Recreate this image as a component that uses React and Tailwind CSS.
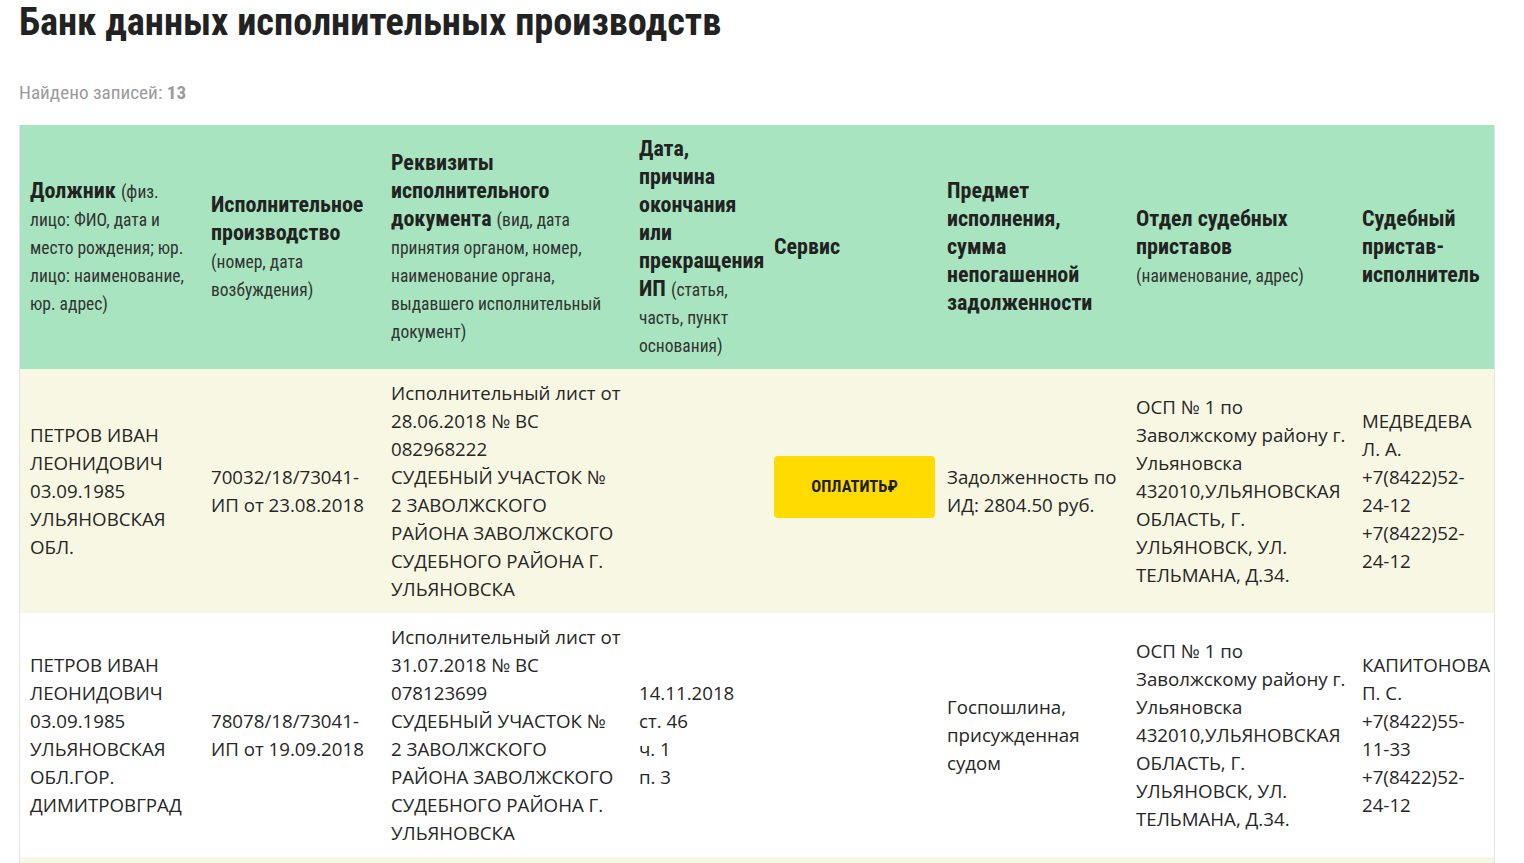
const condensed = { fontFamily: '"Roboto Condensed", "Liberation Sans", sans-serif' }
const body = { fontFamily: '"Open Sans", "Noto Sans", sans-serif' }

const ul = ['СУДЕБНЫЙ УЧАСТОК №', '2 ЗАВОЛЖСКОГО', 'РАЙОНА ЗАВОЛЖСКОГО', 'СУДЕБНОГО РАЙОНА Г.', 'УЛЬЯНОВСКА']
const osp = ['ОСП № 1 по', 'Заволжскому району г.', 'Ульяновска', '432010,УЛЬЯНОВСКАЯ', 'ОБЛАСТЬ, Г.', 'УЛЬЯНОВСК, УЛ.', 'ТЕЛЬМАНА, Д.34.']

const rows = [
    {
        debtor: ['ПЕТРОВ ИВАН', 'ЛЕОНИДОВИЧ', '03.09.1985', 'УЛЬЯНОВСКАЯ', 'ОБЛ.'],
        proc: ['70032/18/73041-', 'ИП от 23.08.2018'],
        doc: ['Исполнительный лист от', '28.06.2018 № ВС', '082968222', ...ul],
        end: [],
        pay: true,
        subject: ['Задолженность по', 'ИД: 2804.50 руб.'],
        dept: osp,
        bailiff: ['МЕДВЕДЕВА', 'Л. А.', '+7(8422)52-', '24-12', '+7(8422)52-', '24-12'],
    },
    {
        debtor: ['ПЕТРОВ ИВАН', 'ЛЕОНИДОВИЧ', '03.09.1985', 'УЛЬЯНОВСКАЯ', 'ОБЛ.ГОР.', 'ДИМИТРОВГРАД'],
        proc: ['78078/18/73041-', 'ИП от 19.09.2018'],
        doc: ['Исполнительный лист от', '31.07.2018 № ВС', '078123699', ...ul],
        end: ['14.11.2018', 'ст. 46', 'ч. 1', 'п. 3'],
        pay: false,
        subject: ['Госпошлина,', 'присужденная', 'судом'],
        dept: osp,
        bailiff: ['КАПИТОНОВА', 'П. С.', '+7(8422)55-', '11-33', '+7(8422)52-', '24-12'],
    },
    {
        debtor: ['ПЕТРОВ ИВАН', 'ЛЕОНИДОВИЧ', '03.09.1985', 'УЛЬЯНОВСКАЯ', 'ОБЛ.'],
        proc: ['91544/18/73041-', 'ИП от 02.11.2018'],
        doc: ['Исполнительный лист от', '12.10.2018 № ВС', '081127845', ...ul],
        end: [],
        pay: true,
        subject: ['Задолженность по', 'ИД: 1500.00 руб.'],
        dept: osp,
        bailiff: ['МЕДВЕДЕВА', 'Л. А.', '+7(8422)52-', '24-12', '+7(8422)52-', '24-12'],
    },
]

const Lines = ({ items }) => items.map((t, i) => <div key={i} className="h-[28px] whitespace-nowrap">{t}</div>)

const Note = ({ children }) => <span className="text-[17.5px] leading-none font-normal text-[#333]">{children}</span>

const Th = ({ children }) => (
    <th className="pl-[10px] py-[10px] text-left align-middle font-bold">
        {children.map((t, i) => <div key={i} className="h-[28px] whitespace-nowrap">{t}</div>)}
    </th>
)

const Td = ({ children }) => (
    <td className="pl-[10px] py-[10px] align-middle">{children}</td>
)

export default function App() {
    return (
        <div className="bg-white min-h-screen px-[19px] text-[#222]">
            <h1 style={condensed} className="text-[38.3px] leading-[44px] font-bold text-[#222]">Банк данных исполнительных производств</h1>
            <p style={condensed} className="mt-[37px] text-[19.2px] leading-[24px] text-[#9b9b9b]">
                Найдено записей: <b className="font-bold">13</b>
            </p>
            <div className="mt-[20px] w-[1476px] border-x border-[#e4e4e4]">
                <table className="w-full table-fixed">
                    <colgroup>
                        <col className="w-[181px]" />
                        <col className="w-[180px]" />
                        <col className="w-[248px]" />
                        <col className="w-[135px]" />
                        <col className="w-[173px]" />
                        <col className="w-[189px]" />
                        <col className="w-[226px]" />
                        <col className="w-[142px]" />
                    </colgroup>
                    <thead style={condensed} className="bg-[#a8e4c0] text-[22px] leading-[28px] text-[#222]">
                        <tr>
                            <Th>{[<>Должник <Note>(физ.</Note></>, <Note>лицо: ФИО, дата и</Note>, <Note>место рождения; юр.</Note>, <Note>лицо: наименование,</Note>, <Note>юр. адрес)</Note>]}</Th>
                            <Th>{['Исполнительное', 'производство', <Note>(номер, дата</Note>, <Note>возбуждения)</Note>]}</Th>
                            <Th>{['Реквизиты', 'исполнительного', <>документа <Note>(вид, дата</Note></>, <Note>принятия органом, номер,</Note>, <Note>наименование органа,</Note>, <Note>выдавшего исполнительный</Note>, <Note>документ)</Note>]}</Th>
                            <Th>{['Дата,', 'причина', 'окончания', 'или', 'прекращения', <>ИП <Note>(статья,</Note></>, <Note>часть, пункт</Note>, <Note>основания)</Note>]}</Th>
                            <Th>{['Сервис']}</Th>
                            <Th>{['Предмет', 'исполнения,', 'сумма', 'непогашенной', 'задолженности']}</Th>
                            <Th>{['Отдел судебных', 'приставов', <Note>(наименование, адрес)</Note>]}</Th>
                            <Th>{['Судебный', 'пристав-', 'исполнитель']}</Th>
                        </tr>
                    </thead>
                    <tbody style={body} className="text-[18.7px] leading-[28px] text-[#262626]">
                        {rows.map((r, i) => (
                            <tr key={i} className={i % 2 === 0 ? 'bg-[#f8f7e4]' : 'bg-white'}>
                                <Td><Lines items={r.debtor} /></Td>
                                <Td><Lines items={r.proc} /></Td>
                                <Td><Lines items={r.doc} /></Td>
                                <Td><Lines items={r.end} /></Td>
                                <Td>
                                    {r.pay && (
                                        <button style={condensed} className="mb-[9px] w-[161px] h-[62px] rounded-[4px] bg-[#ffdb00] text-[16.5px] font-bold text-[#1e1e1e] uppercase block">
                                            Оплатить₽
                                        </button>
                                    )}
                                </Td>
                                <Td><Lines items={r.subject} /></Td>
                                <Td><Lines items={r.dept} /></Td>
                                <Td><Lines items={r.bailiff} /></Td>
                            </tr>
                        ))}
                    </tbody>
                </table>
            </div>
        </div>
    )
}
